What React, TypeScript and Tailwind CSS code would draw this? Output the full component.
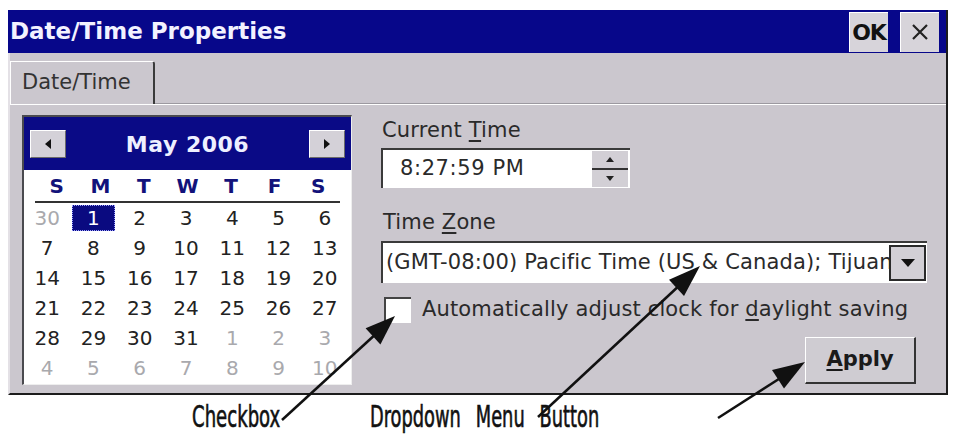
import clsx from "clsx";

const ui = "font-['DejaVu_Sans','Liberation_Sans',sans-serif]";

// May 2006, padded with the trailing days of April and leading days of June
const days: { n: number; muted?: boolean; selected?: boolean }[] = [
    { n: 30, muted: true },
    ...Array.from({ length: 31 }, (_, i) => ({ n: i + 1, selected: i === 0 })),
    ...Array.from({ length: 10 }, (_, i) => ({ n: i + 1, muted: true })),
];

function TitleButton({ children }: { children: React.ReactNode }) {
    return (
        <div className="flex items-center justify-center h-[40px] w-[39px] bg-[#d7d4da] text-[#111] border-t border-l border-white">
            {children}
        </div>
    );
}

function Calendar() {
    return (
        <div className="flex flex-col w-[330px] h-[270px] bg-white border-t-2 border-l-2 border-[#4a4a4f] border-r border-b border-r-[#eeeeee] border-b-[#eeeeee]">
            <div className="flex items-center justify-between h-[53px] bg-[#0a0a86] px-[6px]">
                <div className="flex items-center justify-center w-[36px] h-[28px] bg-[#d4d1d8] border-t border-l border-white border-r border-b border-r-[#6a6a6a] border-b-[#6a6a6a]">
                    <svg width="8" height="10" viewBox="0 0 8 10"><path d="M7 0L1 5l6 5z" fill="#111" /></svg>
                </div>
                <span className="text-[#eef0ff] font-bold text-[22px] tracking-[0.5px] mt-[1px]">May 2006</span>
                <div className="flex items-center justify-center w-[36px] h-[28px] bg-[#d4d1d8] border-t border-l border-white border-r border-b border-r-[#6a6a6a] border-b-[#6a6a6a]">
                    <svg width="8" height="10" viewBox="0 0 8 10"><path d="M1 0l6 5-6 5z" fill="#111" /></svg>
                </div>
            </div>
            <div className="grid grid-cols-7 h-[33px] mx-[11px] border-b-2 border-[#333] items-center">
                {["S", "M", "T", "W", "T", "F", "S"].map((d, i) => (
                    <span key={i} className="text-center font-bold text-[20px] text-[#12127a] leading-none">{d}</span>
                ))}
            </div>
            <div className="grid grid-cols-7 w-[324px]">
                {days.map((d, i) => (
                    <div key={i} className="flex items-center justify-center h-[30px]">
                        <span
                            className={clsx(
                                "text-[20px] leading-none",
                                d.muted ? "text-[#a9a9ad]" : "text-[#222]",
                                d.selected && "flex items-center justify-center w-[43px] h-[26px] bg-[#0a0a80] text-white border border-dotted border-[#9aa0ff]"
                            )}
                        >
                            {d.n}
                        </span>
                    </div>
                ))}
            </div>
        </div>
    );
}

function RightPanel() {
    return (
        <div className="flex flex-col ml-[29px] w-[546px] text-[#2a2a2a] text-[21px] tracking-[0.15px]">
            <span className="leading-[24px] mt-[3px] ml-[1px]">
                Current <span className="underline underline-offset-[3px]">T</span>ime
            </span>
            <div className="flex items-center justify-between mt-[6px] w-[249px] h-[40px] bg-white border-t-2 border-l-2 border-[#3a3a3a] pr-[2px]">
                <span className="ml-[17px] tracking-[0.6px]">8:27:59 PM</span>
                <div className="flex flex-col w-[36px] h-[36px] bg-[#d2cfd5]">
                    <div className="flex flex-1 items-center justify-center border-b-2 border-[#333]">
                        <svg width="8" height="5" viewBox="0 0 8 5"><path d="M4 0l4 5H0z" fill="#222" /></svg>
                    </div>
                    <div className="flex flex-1 items-center justify-center">
                        <svg width="8" height="5" viewBox="0 0 8 5"><path d="M0 0h8L4 5z" fill="#222" /></svg>
                    </div>
                </div>
            </div>
            <span className="leading-[24px] mt-[22px] ml-[2px]">
                Time <span className="underline underline-offset-[3px]">Z</span>one
            </span>
            <div className="flex items-center mt-[7px] w-[546px] h-[42px] bg-white border-t-2 border-l-2 border-[#3a3a3a] pr-[1px]">
                <span className="flex-1 ml-[3px] overflow-hidden whitespace-nowrap">
                    (GMT-08:00) Pacific Time (US &amp; Canada); Tijuana
                </span>
                <div className="flex items-center justify-center w-[37px] h-[36px] bg-[#d2cfd5] border-2 border-[#2a2a2a]">
                    <svg width="14" height="8" viewBox="0 0 14 8"><path d="M0 0h14L7 8z" fill="#111" /></svg>
                </div>
            </div>
            <div className="flex items-center mt-[14px] h-[26px]">
                <div className="w-[27px] h-[26px] ml-[3px] bg-white border-t-2 border-l-2 border-[#444]" />
                <span className="ml-[11px]">
                    Automatically adjust clock for <span className="underline underline-offset-[3px]">d</span>aylight saving
                </span>
            </div>
            <div className="flex justify-end mt-[14px] mr-[11px]">
                <div className="flex items-center justify-center w-[111px] h-[47px] bg-[#cfccd2] border-t border-l border-white border-r-2 border-b-2 border-r-[#333] border-b-[#333] font-bold text-[21px] tracking-normal text-[#1a1a1a]">
                    <span><span className="underline underline-offset-[3px]">A</span>pply</span>
                </div>
            </div>
        </div>
    );
}

export default function App() {
    return (
        <div className={clsx("relative w-[954px] h-[437px] bg-white overflow-hidden", ui)}>
            <div className="flex flex-col ml-[8px] mt-[10px] w-[940px] h-[385px] bg-[#cbc7ce] border-l-2 border-[#e4e1e6] border-r-2 border-r-[#1c1c1c] border-b-2 border-b-[#1c1c1c]">
                <div className="flex items-center justify-between h-[43px] bg-[#07078a] pl-[2px] pr-[7px] -ml-[2px]">
                    <span className="text-[#f2f2ff] font-bold text-[23px]">Date/Time Properties</span>
                    <div className="flex gap-[12px]">
                        <TitleButton><span className="font-bold text-[22px] tracking-[-1px]">OK</span></TitleButton>
                        <TitleButton>
                            <svg width="18" height="18" viewBox="0 0 18 18"><path d="M2 2l14 14M16 2L2 16" stroke="#222" strokeWidth="2.2" /></svg>
                        </TitleButton>
                    </div>
                </div>
                <div className="flex items-end h-[51px] border-b border-[#9c99a0]">
                    <div className="flex items-center w-[145px] h-[43px] bg-[#cbc7ce] border-t border-l border-white border-r-2 border-r-[#3a3a3a] rounded-tr-[3px] -mb-px pl-[11px] text-[21px] text-[#333]">
                        Date/Time
                    </div>
                </div>
                <div className="flex flex-1 pt-[10px] pl-[12px] border-t border-white">
                    <Calendar />
                    <RightPanel />
                </div>
            </div>
            {/* caption labels under the dialog, in a narrow hand-lettered face */}
            <div className="flex font-['DejaVu_Sans_Condensed','Liberation_Sans_Narrow',sans-serif] text-[30px] text-[#111] leading-none mt-[7px] whitespace-nowrap [-webkit-text-stroke:0.6px_#111]">
                <span className="block ml-[192px] w-[86px] [transform:scaleX(0.67)] origin-left">Checkbox</span>
                <span className="block ml-[92px] [transform:scaleX(0.66)] origin-left [word-spacing:14px]">Dropdown Menu Button</span>
            </div>
            <svg className="absolute inset-0 pointer-events-none" width="954" height="437" viewBox="0 0 954 437">
                <g stroke="#111" strokeWidth="2.5" fill="none">
                    <path d="M282 420L378 332" />
                    <path d="M538 417L682 283" />
                    <path d="M718 418L782 377" />
                </g>
                <g fill="#111">
                    <path d="M395 316L380.4 344.4L365.6 328.2z" />
                    <path d="M700 266L684 296L669 279.8z" />
                    <path d="M805 362L784 388.6L772 370z" />
                </g>
            </svg>
        </div>
    );
}
